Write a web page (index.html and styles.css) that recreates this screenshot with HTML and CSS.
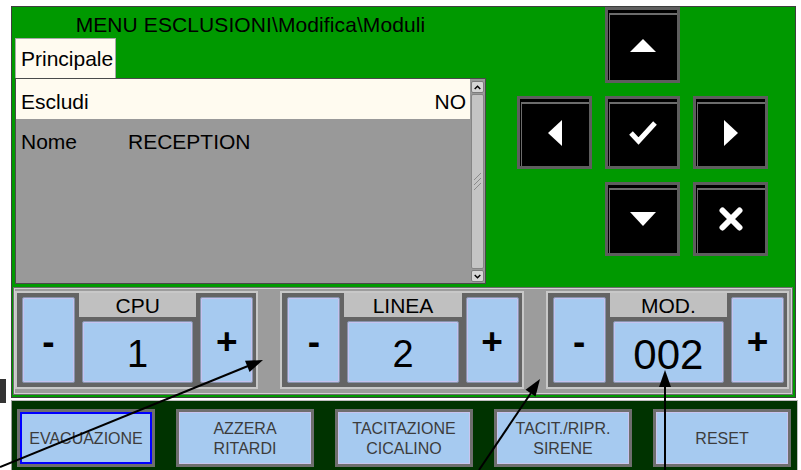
FILE: index.html
```html
<!DOCTYPE html>
<html lang="it">
<head>
    <meta charset="UTF-8">
    <meta name="viewport" content="width=device-width, initial-scale=1.0">
    <title>Menu Esclusioni</title>
    <link rel="stylesheet" href="styles.css">
</head>
<body>
    <div class="screen">
        <div class="panel">
            <div class="top">
                <div class="left">
                    <div class="title">MENU ESCLUSIONI\Modifica\Moduli</div>
                    <div class="tab">Principale</div>
                    <div class="list">
                        <div class="rows">
                            <div class="row sel"><span>Escludi</span><span class="val">NO</span></div>
                            <div class="row"><span class="k">Nome</span><span>RECEPTION</span></div>
                        </div>
                        <div class="scroll">
                            <div class="sb-btn">
                                <svg width="7" height="5" viewBox="0 0 7 5"><polyline points="0.7,4 3.5,1.2 6.3,4" fill="none" stroke="#000" stroke-width="1.4"/></svg>
                            </div>
                            <div class="thumb">
                                <svg width="9" height="20" viewBox="0 0 9 20"><path d="M1 8 L8 1 M1 13 L8 6 M1 18 L8 11" stroke="#8a8a8a" stroke-width="1"/></svg>
                            </div>
                            <div class="sb-btn">
                                <svg width="7" height="5" viewBox="0 0 7 5"><polyline points="0.7,1 3.5,3.8 6.3,1" fill="none" stroke="#000" stroke-width="1.4"/></svg>
                            </div>
                        </div>
                    </div>
                </div>
                <div class="pad">
                    <div></div>
                    <div class="nav">
                        <svg width="26" height="13" viewBox="0 0 26 13"><polygon points="0,13 13,0 26,13" fill="#fff"/></svg>
                    </div>
                    <div></div>
                    <div class="nav">
                        <svg width="14" height="26" viewBox="0 0 14 26"><polygon points="14,0 14,26 0,13" fill="#fff"/></svg>
                    </div>
                    <div class="nav">
                        <svg width="28" height="24" viewBox="0 0 28 24"><polyline points="2,12 9.5,20 26,2" fill="none" stroke="#fff" stroke-width="5"/></svg>
                    </div>
                    <div class="nav">
                        <svg width="14" height="26" viewBox="0 0 14 26"><polygon points="0,0 0,26 14,13" fill="#fff"/></svg>
                    </div>
                    <div></div>
                    <div class="nav">
                        <svg width="26" height="14" viewBox="0 0 26 14"><polygon points="0,0 26,0 13,14" fill="#fff"/></svg>
                    </div>
                    <div class="nav">
                        <svg width="24" height="24" viewBox="0 0 24 24"><path d="M3.5 3.5 L20.5 20.5 M20.5 3.5 L3.5 20.5" stroke="#fff" stroke-width="6" stroke-linecap="round"/></svg>
                    </div>
                </div>
            </div>
            <div class="bar">
                <div class="group">
                    <div class="step">-</div>
                    <div class="mid"><div class="label">CPU</div><div class="value">1</div></div>
                    <div class="step">+</div>
                </div>
                <div class="group">
                    <div class="step">-</div>
                    <div class="mid"><div class="label">LINEA</div><div class="value">2</div></div>
                    <div class="step">+</div>
                </div>
                <div class="group">
                    <div class="step">-</div>
                    <div class="mid"><div class="label">MOD.</div><div class="value big">002</div></div>
                    <div class="step">+</div>
                </div>
            </div>
        </div>
        <div class="cmds">
            <div class="cmd focus">EVACUAZIONE</div>
            <div class="cmd">AZZERA<br>RITARDI</div>
            <div class="cmd">TACITAZIONE<br>CICALINO</div>
            <div class="cmd">TACIT./RIPR.<br>SIRENE</div>
            <div class="cmd">RESET</div>
        </div>
    </div>

    <div class="mark"></div>

    <svg class="arrows" width="801" height="470" viewBox="0 0 801 470">
        <line x1="0" y1="467" x2="248" y2="366" stroke="#000" stroke-width="2"/>
        <polygon points="263,360 249.6,372 245,360.8" fill="#000"/>
        <line x1="479" y1="470" x2="531" y2="393" stroke="#000" stroke-width="2"/>
        <polygon points="540,379 535.5,396.4 525.5,389.8" fill="#000"/>
        <line x1="665" y1="470" x2="665" y2="386" stroke="#000" stroke-width="2"/>
        <polygon points="665,370 659,387 671,387" fill="#000"/>
    </svg>
</body>
</html>
```

FILE: styles.css
```css
*{
    box-sizing: border-box;
}
html, body{
    margin: 0;
}
body{
    background-color: #fff;
    font-family: "Liberation Sans", Arial, sans-serif;
    color: #000;
    width: 801px;
    height: 470px;
    overflow: hidden;
    position: relative;
}

.screen{
    margin: 6px 0 0 11px;
    width: 787px;
}

/* green window */
.panel{
    width: 785px;
    height: 392px;
    background-color: #009900;
    border: 1px solid #3e3e3e;
}
.top{
    display: flex;
    height: 277px;
}
.left{
    width: 471px;
    margin-left: 3px;
}
.title{
    height: 31px;
    padding-top: 4px;
    line-height: 27px;
    font-size: 21px;
    text-align: center;
    letter-spacing: 0.1px;
}
.tab{
    width: 101px;
    height: 40px;
    padding: 8px 0 0 5px;
    line-height: 24px;
    font-size: 21px;
    background-color: #fffbf0;
    border: 1px solid #a8a8a8;
    border-bottom: none;
}
.list{
    display: flex;
    height: 206px;
    background-color: #999;
    border: 1px solid #4a4a4a;
}
.rows{
    width: 454px;
}
.row{
    display: flex;
    height: 40px;
    padding: 5px 4px 0 5px;
    line-height: 35px;
    font-size: 21px;
}
.row.sel{
    background-color: #fffbf0;
}
.row .val{
    margin-left: auto;
}
.row .k{
    width: 107px;
}
.scroll{
    width: 13px;
    margin: 1px 1px 1px 1px;
    display: flex;
    flex-direction: column;
    gap: 1px;
    padding-top: 1px;
}
.sb-btn{
    height: 12px;
    display: flex;
    align-items: center;
    justify-content: center;
    background-color: #d6d6d6;
    border: 1px solid #7c7c7c;
    border-radius: 2px;
}
.thumb{
    flex: 1;
    display: flex;
    align-items: center;
    justify-content: center;
    background-color: #c4c4c4;
    border: 1px solid #858585;
    border-radius: 2px;
}

/* navigation keys */
.pad{
    margin-left: 31px;
    display: grid;
    grid-template-columns: 75px 75px 75px;
    grid-template-rows: 76px 73px 74px;
    gap: 13px;
}
.nav{
    background-color: #000;
    border: 3px solid #5e5e5e;
    box-shadow: inset 1px 3px 0 #000, inset 2px 5px 0 #6c6c6c;
    display: flex;
    align-items: center;
    justify-content: center;
}

/* selectors */
.bar{
    width: 780px;
    height: 108px;
    margin: 3px 0 0 1px;
    padding: 3px 3px 0 1px;
    display: flex;
    gap: 22px;
    background-color: #9c9c9c;
    border: 1px solid #6c6c6c;
    box-shadow: inset 0 0 0 1px #d2d2d2;
}
.group{
    flex: 1;
    height: 98px;
    display: flex;
    gap: 4px;
    padding: 0 3px 0 5px;
    background-color: #646464;
    border: 2px solid #c8c8c8;
}
.step, .value{
    background-color: #a6caf0;
    border: 1px solid #8794ac;
    box-shadow: inset 0 0 0 1px #c6c2ee;
    border-radius: 2px;
}
.step{
    width: 53px;
    margin: 4px 0;
    display: flex;
    align-items: center;
    justify-content: center;
    font-size: 37px;
    font-weight: bold;
    padding-top: 4px;
}
.mid{
    flex: 1;
    display: flex;
    flex-direction: column;
}
.label{
    height: 24px;
    padding-top: 1px;
    line-height: 23px;
    text-align: center;
    font-size: 21px;
    background-color: #c0c0c0;
}
.value{
    flex: 1;
    margin: 4px 3px;
    display: flex;
    align-items: center;
    justify-content: center;
    font-size: 38px;
    padding-top: 5px;
}
.value.big{
    font-size: 42px;
    padding-top: 6px;
}

/* command buttons */
.cmds{
    margin-top: 2px;
    height: 70px;
    display: flex;
    gap: 21px;
    padding: 8px 0 0 5px;
    background-color: #003300;
    border-top: 1px solid #bdbdbd;
    border-left: 1px solid #9a9a9a;
    border-right: 1px solid #bdbdbd;
}
.cmd{
    width: 138px;
    height: 58px;
    display: flex;
    align-items: center;
    justify-content: center;
    text-align: center;
    padding-top: 2px;
    font-size: 16px;
    line-height: 20px;
    color: #3c3c3c;
    background-color: #a6caf0;
    border: 3px solid #6e6e6e;
    box-shadow: inset 0 0 0 1px #c8c4ee;
}
.cmd.focus{
    box-shadow: inset 0 0 0 2px #0000ff;
}

.mark{
    position: absolute;
    left: 0;
    top: 379px;
    width: 6px;
    height: 24px;
    background-color: #333;
}
.arrows{
    position: absolute;
    left: 0;
    top: 0;
    pointer-events: none;
}
```
